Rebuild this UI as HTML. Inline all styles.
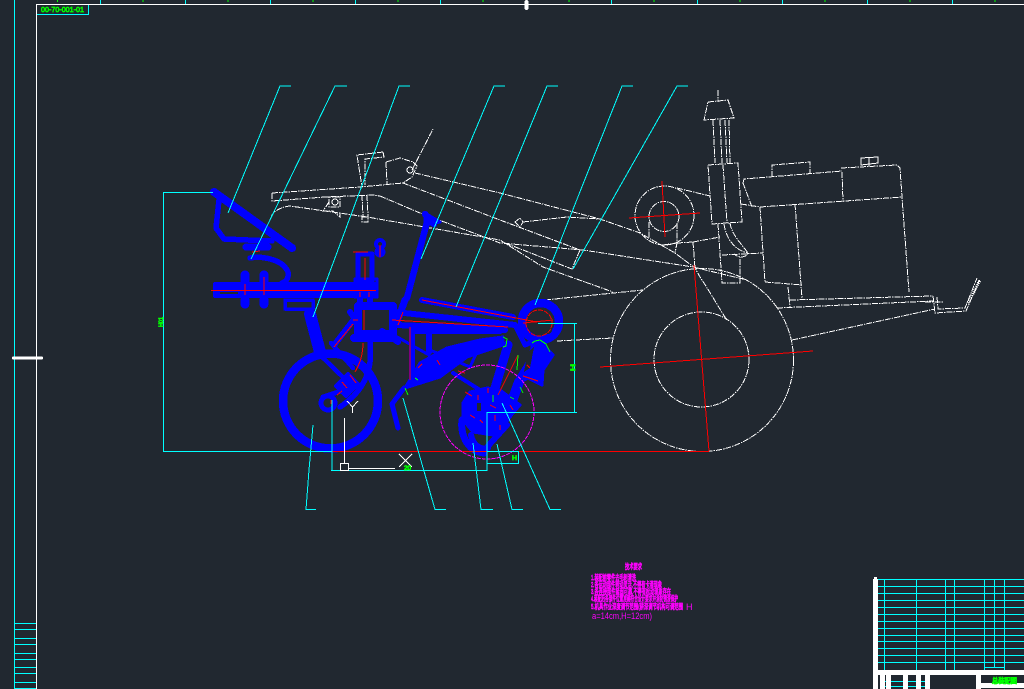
<!DOCTYPE html>
<html><head><meta charset="utf-8"><style>
html,body{margin:0;padding:0;background:#212830;width:1024px;height:689px;overflow:hidden}
svg{display:block;shape-rendering:crispEdges}
text{font-family:"Liberation Sans","Noto Sans CJK SC",sans-serif}
</style></head><body>
<svg width="1024" height="689" viewBox="0 0 1024 689" xmlns="http://www.w3.org/2000/svg">
<rect width="1024" height="689" fill="#212830"/>
<!-- frame -->
<g fill="none" stroke="#0ff" stroke-width="1">
<path d="M14.5 0V689M100.5 0V4M185.5 0V4M270.5 0V4M355.5 0V4M440.5 0V4M611.5 0V4M697.5 0V4M782.5 0V4M867.5 0V4M952.5 0V4M37 14.5H88.5V4"/>
<path d="M14 623.5H36M14 629.5H36M14 638.5H36M14 644.5H36M14 653.5H36M14 659.5H36M14 667.5H36M14 673.5H36M14 682.5H36M14 688.5H36" />
</g>
<path d="M36.5 689V4.5H1024" fill="none" stroke="#fff"/>
<path d="M57.5 0V2M143 0V2M228 0V2M313 0V2M398 0V2M483 0V2M569 0V2M654 0V2M740 0V2M825 0V2M910 0V2M995 0V2" stroke="#0f0" stroke-width="1"/>
<text x="41" y="12" font-size="7.500" fill="#0f0" stroke="#0f0" stroke-width=".7" textLength="43" lengthAdjust="spacingAndGlyphs">00-70-001-01</text>
<rect x="12" y="356.5" width="31" height="3" rx="1.500" fill="#fff"/>
<rect x="524.500" y="0" width="4" height="10" rx="2" fill="#fff"/>

<!-- white reference drawing -->
<g fill="none" stroke="#fff" stroke-width="1" stroke-dasharray="6 1 1.500 1">
<circle cx="702" cy="360" r="91.500"/>
<circle cx="701.500" cy="359.500" r="47.500"/>
<circle cx="664.500" cy="215.500" r="29.500"/>
<circle cx="664" cy="216.500" r="15"/>
<path d="M718 90V102M708 102L728 100L734 118L704 120L708 102"/>
<path d="M713 120L715 163M729 120L730 163M720 120L722 163M725 120L727 163"/>
<path d="M708 165L738 163L742 222L712 224L708 165M723 165L727 223"/>
<path d="M718 224L722 283H740V257M724 224C726 238 734 250 748 253M730 223C732 235 740 242 748 253C746 258 738 258 734 254M722 255L763 253"/>
<path d="M741 204L760 207L765 282M760 207L902 197M743 183L744 179L842 171M743 183L752 207"/>
<path d="M772 177V165L810 162V173M842 172L843 202M841 168L897 165L900 168L902 197L909 292"/>
<path d="M795 204L802 298M765 282L802 285M788 287L790 307M790 300L933 296M777 308L933 301M792 340L935 309"/>
<path d="M933 296L935 313L966 311L980 279M937 297L938 309L965 308L977 278M925 302H943"/>
<path d="M545 300L643 290M557 341L613 338"/>
<path d="M415 173L500 193L600 219L640 233L675 253L695 268L700 277C712 295 720 310 727 320"/>
<path d="M523 222L567 217L600 219"/>
<path d="M380 196L420 213L447 223L500 243L583 250L693 267L747 280"/>
<path d="M403 183L500 220L580 250L572 269L505 243"/>
<path d="M271 218C272 212 280 207 290 206L367 217L500 240L543 267L613 292"/>
<path d="M515 222L520 218L523 222L520 227Z"/>
<path d="M677 243L693 242M693 242L720 237M693 242L695 268M677 223V243L675 253M649 222V237M663 245L677 243M677 188L710 196"/>
<path d="M272 193L360 187L403 183M272 193V201L325 197L373 195L380 196"/>
<path d="M383 152L384 157L365 159L365 185M383 152L357 155L362 187"/>
<path d="M386 162L400 158L413 162L417 166L412 177L403 183M386 162L387 184M412 170L433 129"/>
<path d="M362 195L363 217M367 195L368 217M362 217H368V222H362Z"/>
<path d="M325 197H340V207H329V197M329 202L323 211H333L340 217V212"/>
</g>
<g fill="none" stroke="#fff" stroke-width="1">
<circle cx="335" cy="202" r="3"/><circle cx="410" cy="170" r="3"/>
<path d="M861 158L878 157V163L861 165ZM869 158V166"/>
</g>
<path d="M968 303L980 280" stroke="#fff" stroke-width="3" stroke-dasharray="1 1" fill="none"/>

<!-- blue machine -->
<g fill="none" stroke="#0000ff" stroke-linecap="round" stroke-linejoin="round">
<path d="M214 192L292 248" stroke-width="8"/>
<path d="M219 200L216 228L224 239L272 241" stroke-width="5.500"/>
<path d="M246 247H268" stroke-width="7"/>
<path d="M250 258L257 257C272 258 284 262 288 272C289 278 286 282 282 283" stroke-width="5.500"/>
<rect x="215" y="284" width="160" height="12" fill="#0000ff" stroke-width="4"/>
<path d="M245 281V275M264 281V275M245 300V304M264 300V304" stroke-width="9"/>
<rect x="285" y="300" width="28" height="9" stroke-width="3.500"/>
<path d="M310 314L320 352" stroke-width="12"/>
<circle cx="330.500" cy="401" r="47.500" stroke-width="8.500"/>
<path d="M318 353L350 384M331 343L353 368" stroke-width="4.500"/>
<path d="M348 374L358 384L346 396L336 386Z" fill="#0000ff" stroke-width="4"/>
<path d="M344 390L323 397" stroke-width="5"/>
<circle cx="328" cy="403" r="7" stroke-width="5"/>
<path d="M340 407C358 395 368 380 370 362L370 340" stroke-width="5.500"/>
<rect x="358" y="306" width="35" height="28" stroke-width="8"/>
<path d="M354 338H392" stroke-width="8"/>
<rect x="358" y="254" width="14" height="28" stroke-width="5"/>
<path d="M360 282V302M370 282V302" stroke-width="6"/>
<rect x="355" y="279" width="22" height="18" stroke-width="3"/>
<circle cx="380" cy="244" r="4" stroke-width="4"/>
<circle cx="380" cy="252" r="3" stroke-width="5"/>
<path d="M355 318L335 344M350 312L356 320" stroke-width="6"/>
<path d="M425 214L434 224M427 222L407 298" stroke-width="6.500"/>
<path d="M425 213V225L440 222Z" fill="#0000ff" stroke-width="3"/>
<path d="M405 300L397 322" stroke-width="7"/>
<path d="M422 300L513 317" stroke-width="6"/>
<path d="M395 312L515 325" stroke-width="6"/>
<path d="M382 331L398 342M395 325L450 327L505 330" stroke-width="6"/>
<path d="M412 327V383M412 331H500M429 333V352" stroke-width="6"/>
<path d="M392 334L429 355" stroke-width="3"/>
<path d="M405 388L420 363L447 348L480 340L503 337L503 345L467 357L440 377Z" fill="#0000ff" stroke-width="3"/>
<path d="M430 350L470 367L480 345" stroke-width="3"/>
<path d="M404 388L392 404L394 412L398 428" stroke-width="5"/>
<circle cx="540.500" cy="321.500" r="18.500" stroke-width="8.500"/>
<path d="M515 325L525 345L532 342" stroke-width="5"/>
<path d="M532 343L540 340L550 352L553 355L543 370L542 385L528 378L520 382L518 377L527 363L532 348Z" fill="#0000ff" stroke-width="3"/>
<path d="M495 388L508 345" stroke-width="9"/>
<path d="M519 382L507 415" stroke-width="10"/>
<path d="M453 373L480 390" stroke-width="4"/>
<path d="M463 403L470 392L487 388L500 390L520 405L513 413L503 427L493 435L473 432L463 420Z" fill="#0000ff" stroke-width="3"/>
<path d="M462 420C460 438 470 452 484 453" stroke-width="7"/>
<path d="M471 435C473 445 480 450 488 448M507 425L488 446" stroke-width="6"/>
</g>
<g fill="#212830">
<rect x="220" y="292" width="18" height="2"/>
<circle cx="533" cy="321" r="5"/><circle cx="548" cy="330" r="4"/><circle cx="549" cy="316" r="3"/>
<rect x="477" y="403" width="4" height="8"/><rect x="503" y="378" width="3" height="5"/>
<path d="M528 352L534 347L530 368L524 372Z"/>
</g>

<!-- red -->
<g fill="none" stroke="#f00" stroke-width="1">
<path d="M332 451.500H709M600 367L813 351M694 265L709 451M629 218L700 213M662 181L665 237"/>
<path d="M211 290.500H376M245 284V295M264 277V295M365 258V280M353 252H368M380 245V257M364 310V330M353 320H358M353 324L334 347M363 343C363 352 361 362 355 372"/>
<path d="M392 320L508 327M422 300L537 322M403 312L398 325M410 327V380M252 252L260 251M350 375L356 383M342 382L347 388M337 395L342 391M331 400V404M360 292V297M369 292V297"/>
<circle cx="539" cy="323" r="13" stroke-dasharray="5 1"/>
<path d="M523 323L553 320M518 355L498 395M465 392L472 396M478 395V400M488 388V393M490 405L496 408M470 415L475 418M480 420L483 423M495 415V421M510 405L513 410M500 425V430M527 365L530 368M523 376L538 381M437 360L440 365M418 368L422 364M458 371L465 373"/>
</g>

<!-- magenta circle -->
<circle cx="487" cy="412" r="47" fill="none" stroke="#f0f" stroke-width="1" stroke-dasharray="4 1"/>

<!-- green -->
<g fill="none" stroke="#0f0" stroke-width="1">
<path d="M503 337L507 339L506 346L503 347M532 343L535 341L540 340L546 344L550 352M518 355L517 370M520 387L523 393M493 395V402M510 397L514 399M405 388L408 395M415 378L418 380"/>
</g>

<!-- cyan leaders -->
<g fill="none" stroke="#0ff" stroke-width="1">
<path d="M291 86H280L228 213M347 86H335L251 259M410 86H399L313 317M505 86H494L421 259M558 86H547L456 307M633 86H622L535 305M688 86H677L573 269"/>
<path d="M316 509.500H306L309 470L313 425M446 509.500H435L403 398M493 509.500H481L473 443M523 509.500H512L497 444M561 509.500H550L502 403"/>
<path d="M213 192.500H163.500V451.500H332M332 400V470M331 470.500H487V412.500H577M574.500 412V323.500M538 323.500H577M486.500 451.500H518.500V463.500H486.500"/>
</g>

<!-- UCS -->
<g fill="none" stroke="#fff" stroke-width="1">
<path d="M347 401L352.500 407L358 401M352.500 407V413"/>
<path d="M344.500 418V463M340.500 463.500H348.500V470.500H340.500ZM349 468.500H395"/>
<path d="M399 454L412 467M412 454L399 467"/>
</g>
<g fill="#0f0" stroke="#0f0" stroke-width=".8" font-size="6">
<text x="404" y="470" textLength="7" lengthAdjust="spacingAndGlyphs">20</text>
<text transform="translate(163,327) rotate(-90)" textLength="10" lengthAdjust="spacingAndGlyphs">H01</text>
<text transform="translate(575,371) rotate(-90)" textLength="7" lengthAdjust="spacingAndGlyphs">H</text>
<text x="512" y="460" textLength="5" lengthAdjust="spacingAndGlyphs">H</text>
</g>

<!-- notes -->
<g fill="#f0f" font-size="7.500" stroke="#f0f" stroke-width=".7">
<text x="625" y="569" textLength="17" lengthAdjust="spacingAndGlyphs">技术要求</text>
<text x="591" y="580" textLength="45" lengthAdjust="spacingAndGlyphs">1.装配前零件去毛刺清洗</text>
<text x="591" y="587" textLength="71" lengthAdjust="spacingAndGlyphs">2.各运动部件转动灵活,不得有卡滞现象</text>
<text x="591" y="594" textLength="80" lengthAdjust="spacingAndGlyphs">3.各连接部件紧固可靠,不得有松动现象存在</text>
<text x="591" y="601" textLength="87" lengthAdjust="spacingAndGlyphs">4.装配后各部件位置准确符合设计要求并涂防锈漆保护</text>
<text x="591" y="609" textLength="92" lengthAdjust="spacingAndGlyphs">5.机具作业深度调节范围(耕深调节机构可调范围</text>
</g>
<g fill="#f0f" font-size="9">
<text x="686" y="610">H</text>
<text x="592" y="619" textLength="60" lengthAdjust="spacingAndGlyphs">a=14cm,H=12cm)</text>
</g>

<!-- title block -->
<g fill="none" stroke="#0ff" stroke-width="1">
<path d="M877 579.500H1024M877 586.500H1024M877 593.500H1024M877 600.500H1024M877 607.500H1024M877 614.500H1024M877 621.500H1024M877 628.500H1024M877 635.500H1024M877 641.500H1024M877 648.500H1024M877 655.500H1024M877 662.500H1024"/>
<path d="M884.500 579V673M916.500 579V673M945.500 579V673M954.500 579V673M984.500 579V673M994.500 579V668M1004.500 579V673M985 667.500H1004"/>
<path d="M885 681.500H925M885 686.500H925"/>
</g>
<g fill="#fff">
<rect x="873" y="579" width="5" height="110"/>
<rect x="874" y="577" width="3" height="2"/>
<rect x="877" y="670" width="147" height="5"/>
<rect x="880" y="675" width="5" height="14"/>
<rect x="886" y="675" width="5" height="14"/>
<rect x="903" y="675" width="5" height="14"/>
<rect x="916" y="675" width="5" height="14"/>
<rect x="925" y="675" width="5" height="14"/>
<rect x="976" y="675" width="5" height="14"/>
<rect x="981" y="683" width="43" height="5"/>
</g>
<text x="992" y="683" font-size="7" fill="#0f0" stroke="#0f0" stroke-width=".9" textLength="25" lengthAdjust="spacingAndGlyphs">总装配图</text>
</svg>
</body></html>
